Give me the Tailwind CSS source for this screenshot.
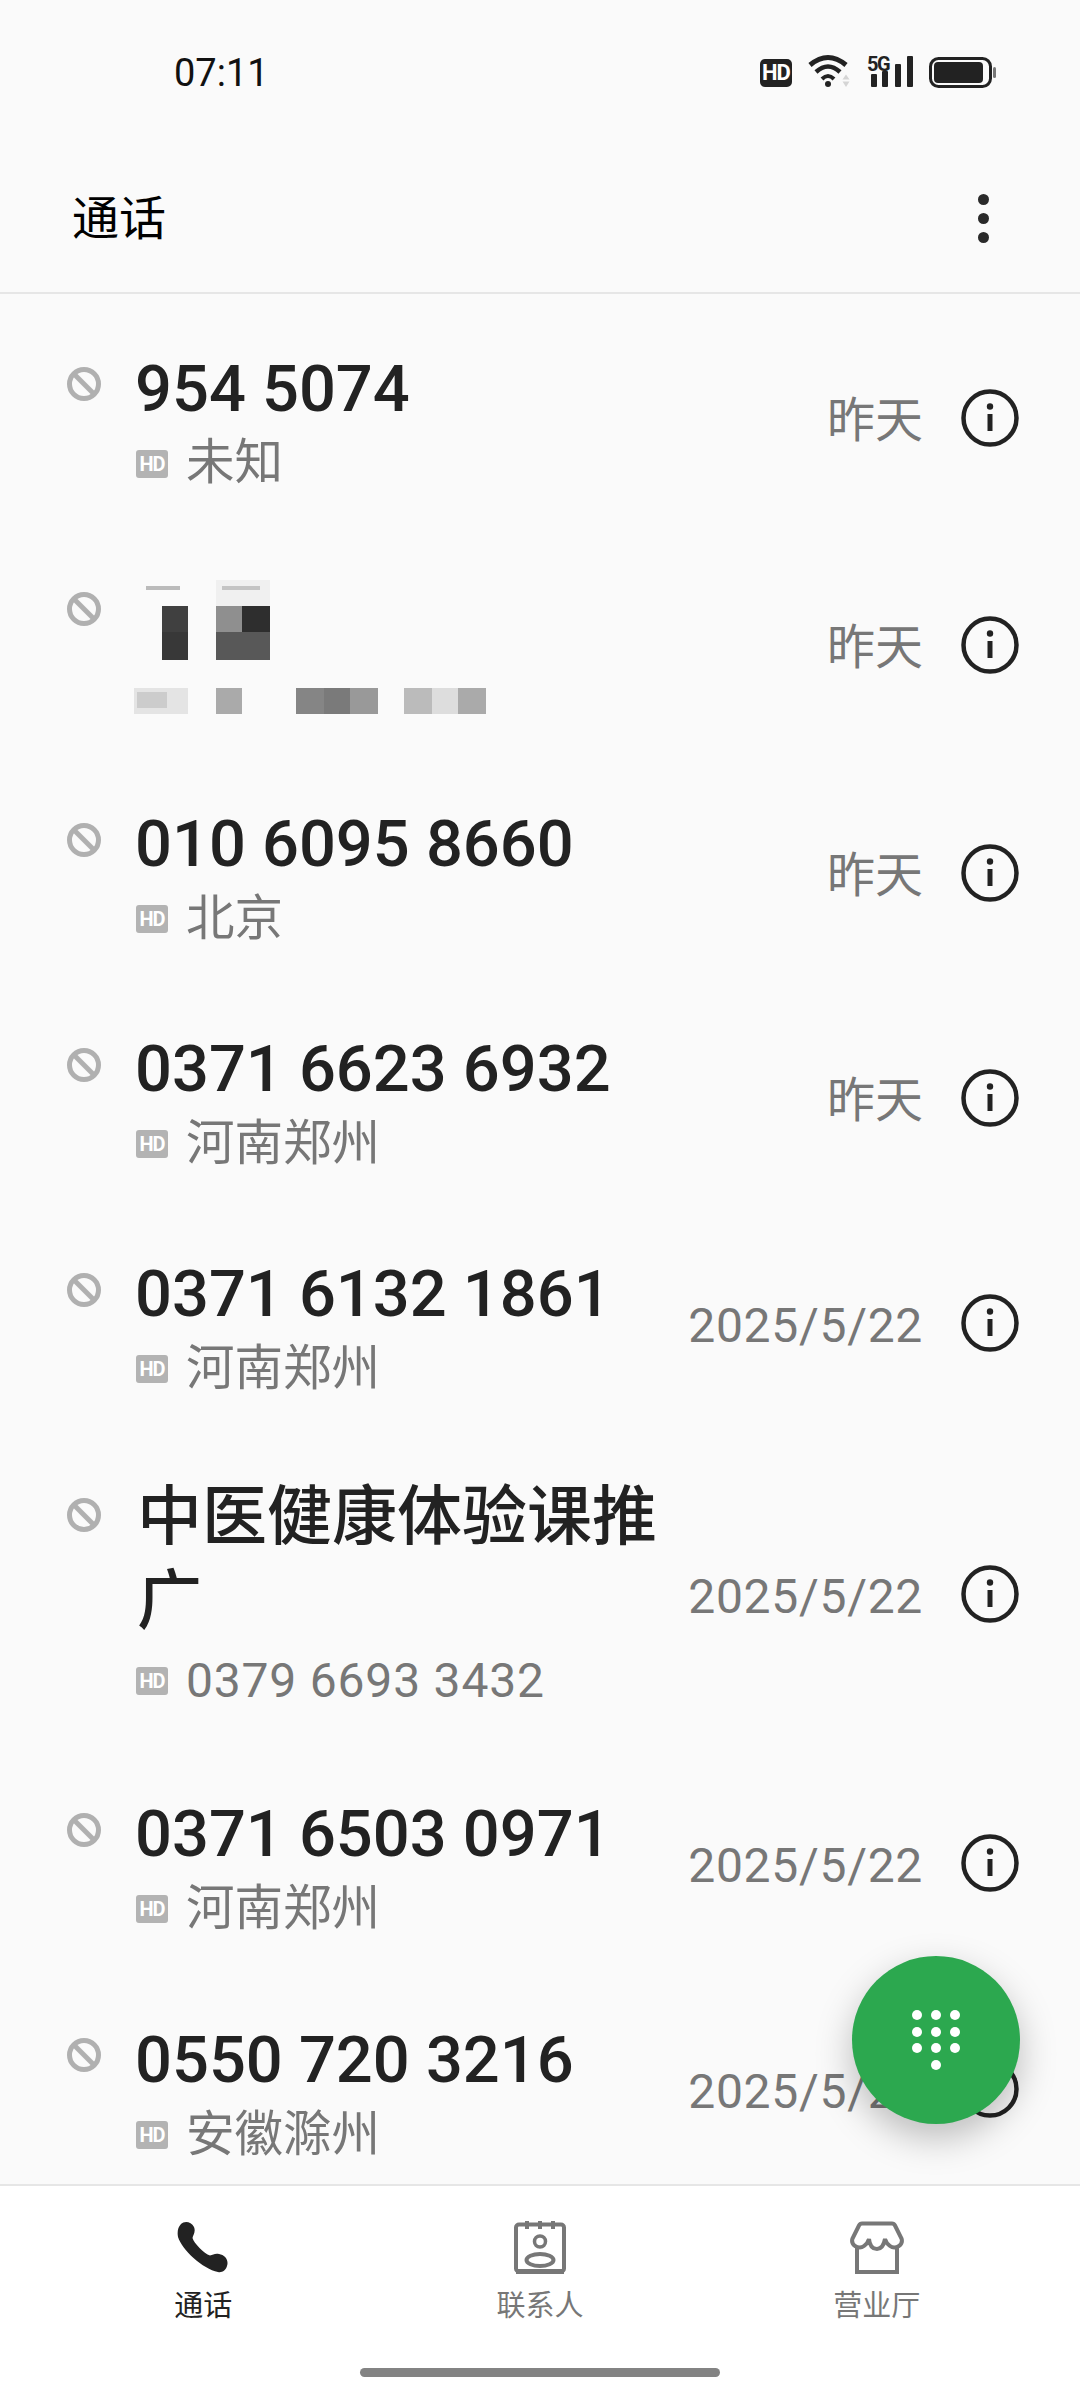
<!DOCTYPE html>
<html lang="zh-CN">
<head>
  <meta charset="UTF-8" />
  <meta name="viewport" content="width=device-width, initial-scale=1.0"/>
  <title>通话</title>
  <script src="https://cdn.jsdelivr.net/npm/@tailwindcss/browser@4"></script>
</head>
<body class="bg-[#fafafa] text-[#222222] font-[Roboto,'Noto_Sans_CJK_SC',sans-serif]">

  <svg class="hidden">
    <symbol id="ban" viewBox="0 0 34 34">
      <circle cx="17" cy="17" r="14.5" fill="none" stroke="#b0b0b0" stroke-width="5"/>
      <path d="M7 7L27 27" stroke="#b0b0b0" stroke-width="5"/>
    </symbol>
    <symbol id="info" viewBox="0 0 58 58">
      <circle cx="29" cy="29" r="26.5" fill="none" stroke="#222222" stroke-width="4.5"/>
      <circle cx="29" cy="17.500" r="3.200" fill="#222222"/>
      <path d="M29 25V42" fill="none" stroke="#222222" stroke-width="5"/>
    </symbol>
  </svg>

  <div class="relative h-[2400px] w-[1080px] flex flex-col overflow-hidden">

    <!-- status bar -->
    <div class="h-[146px] shrink-0 flex items-center justify-between pl-[174px] pr-[84px]">
      <span class="text-[38px] leading-none text-[#111111]">07:11</span>
      <div class="flex items-center gap-4">
        <div class="w-[32px] h-[28px] rounded-[5px] bg-[#222222] text-white text-[22px] leading-[28px] font-bold text-center tracking-[-1px]">HD</div>
        <svg width="43" height="33" viewBox="0 0 43 33" class="-mt-[5px]">
          <g fill="none" stroke="#222222">
            <path d="M2 11Q20 -4 38 11" stroke-width="5"/>
            <path d="M8 18Q20 7 32 18" stroke-width="4.5"/>
            <path d="M14 25Q20 19 26 25" stroke-width="4"/>
          </g>
          <circle cx="20" cy="30" r="3" fill="#222222"/>
          <path d="M34.500 25.500L38 20.500L41.500 25.500ZM34.500 27.500H41.500L38 33Z" fill="#d5d5d5"/>
        </svg>
        <div class="relative w-[46px] h-[31px] -mt-[3px]">
          <span class="absolute left-0 -top-[2px] text-[20px] leading-[20px] font-bold tracking-[-1.5px]">5G</span>
          <svg width="46" height="31" viewBox="0 0 46 31">
            <rect x="4" y="18" width="6" height="13" rx="1" fill="#222222"/>
            <rect x="15" y="15" width="6" height="16" rx="1" fill="#222222"/>
            <rect x="28" y="8" width="6" height="23" rx="1" fill="#222222"/>
            <rect x="40" y="0" width="6" height="31" rx="1" fill="#222222"/>
          </svg>
        </div>
        <svg width="67" height="31" viewBox="0 0 67 31" class="-mt-[1px]">
          <rect x="1.500" y="1.500" width="60" height="28" rx="8" fill="none" stroke="#222222" stroke-width="3"/>
          <rect x="5" y="5" width="49" height="21" rx="4" fill="#222222"/>
          <rect x="64" y="10" width="3" height="11" rx="1.500" fill="#777777"/>
        </svg>
      </div>
    </div>

    <!-- title bar -->
    <div class="h-[148px] shrink-0 flex items-center justify-between pl-[72px] pr-[91px] pb-[2px] border-b-2 border-[#e6e6e6]">
      <span class="text-[47px] leading-none text-black">通话</span>
      <div class="flex flex-col gap-2">
        <span class="w-[11px] h-[11px] rounded-full bg-[#2a2a2a]"></span>
        <span class="w-[11px] h-[11px] rounded-full bg-[#2a2a2a]"></span>
        <span class="w-[11px] h-[11px] rounded-full bg-[#2a2a2a]"></span>
      </div>
    </div>

    <!-- call list -->
    <div class="flex-1 min-h-0 overflow-hidden pt-[11px]">

      <div class="h-[225px] flex items-center pl-[67px] pr-[61px]">
        <svg class="w-[34px] h-[34px] shrink-0 self-start mt-[62px]"><use href="#ban"/></svg>
        <div class="ml-[34px] w-[531px] pt-[8px]">
          <div class="text-[65px] leading-[84px] font-medium">954 5074</div>
          <div class="flex items-center gap-[18px] h-[66px] pl-[1px] text-[48.5px] text-[#777777]"><div class="w-[32px] h-[28px] rounded-[3px] bg-[#b3b3b3] text-white text-[20px] leading-[28px] font-bold text-center tracking-[-1px]">HD</div>未知</div>
        </div>
        <span class="ml-auto pt-[6px] text-[48px] text-[#777777]">昨天</span>
        <svg class="w-[58px] h-[58px] ml-[38px] shrink-0"><use href="#info"/></svg>
      </div>

      <!-- row with the name pixelated out -->
      <div class="relative h-[230px] flex items-center pl-[67px] pr-[61px]">
        <svg class="w-[34px] h-[34px] shrink-0 self-start mt-[62px]"><use href="#ban"/></svg>
        <span class="ml-auto pt-[6px] text-[48px] text-[#777777]">昨天</span>
        <svg class="w-[58px] h-[58px] ml-[38px] shrink-0"><use href="#info"/></svg>
        <div class="absolute left-[146px] top-[56px] w-[34px] h-[4px] bg-[#bbbbbb]"></div>
        <div class="absolute left-[216px] top-[50px] w-[54px] h-[26px] bg-[#f0f0f0]"></div>
        <div class="absolute left-[222px] top-[56px] w-[38px] h-[4px] bg-[#c4c4c4]"></div>
        <div class="absolute left-[162px] top-[76px] w-[26px] h-[26px] bg-[#404040]"></div>
        <div class="absolute left-[162px] top-[102px] w-[26px] h-[28px] bg-[#383838]"></div>
        <div class="absolute left-[216px] top-[76px] w-[26px] h-[26px] bg-[#8f8f8f]"></div>
        <div class="absolute left-[242px] top-[76px] w-[28px] h-[26px] bg-[#2e2e2e]"></div>
        <div class="absolute left-[216px] top-[102px] w-[54px] h-[28px] bg-[#585858]"></div>
        <div class="absolute left-[134px] top-[158px] w-[54px] h-[26px] bg-[#e4e4e4]"></div>
        <div class="absolute left-[137px] top-[162px] w-[30px] h-[16px] bg-[#cccccc]"></div>
        <div class="absolute left-[216px] top-[158px] w-[26px] h-[26px] bg-[#aaaaaa]"></div>
        <div class="absolute left-[296px] top-[158px] w-[28px] h-[26px] bg-[#858585]"></div>
        <div class="absolute left-[324px] top-[158px] w-[26px] h-[26px] bg-[#7a7a7a]"></div>
        <div class="absolute left-[350px] top-[158px] w-[28px] h-[26px] bg-[#999999]"></div>
        <div class="absolute left-[404px] top-[158px] w-[28px] h-[26px] bg-[#bbbbbb]"></div>
        <div class="absolute left-[432px] top-[158px] w-[26px] h-[26px] bg-[#dddddd]"></div>
        <div class="absolute left-[458px] top-[158px] w-[28px] h-[26px] bg-[#aaaaaa]"></div>
      </div>

      <div class="h-[226px] flex items-center pl-[67px] pr-[61px]">
        <svg class="w-[34px] h-[34px] shrink-0 self-start mt-[63px]"><use href="#ban"/></svg>
        <div class="ml-[34px] w-[531px] pt-[8px]">
          <div class="text-[65px] leading-[84px] font-medium">010 6095 8660</div>
          <div class="flex items-center gap-[18px] h-[66px] pl-[1px] text-[48.5px] text-[#777777]"><div class="w-[32px] h-[28px] rounded-[3px] bg-[#b3b3b3] text-white text-[20px] leading-[28px] font-bold text-center tracking-[-1px]">HD</div>北京</div>
        </div>
        <span class="ml-auto pt-[6px] text-[48px] text-[#777777]">昨天</span>
        <svg class="w-[58px] h-[58px] ml-[38px] shrink-0"><use href="#info"/></svg>
      </div>

      <div class="h-[224px] flex items-center pl-[67px] pr-[61px]">
        <svg class="w-[34px] h-[34px] shrink-0 self-start mt-[62px]"><use href="#ban"/></svg>
        <div class="ml-[34px] w-[531px] pt-[8px]">
          <div class="text-[65px] leading-[84px] font-medium">0371 6623 6932</div>
          <div class="flex items-center gap-[18px] h-[66px] pl-[1px] text-[48.5px] text-[#777777]"><div class="w-[32px] h-[28px] rounded-[3px] bg-[#b3b3b3] text-white text-[20px] leading-[28px] font-bold text-center tracking-[-1px]">HD</div>河南郑州</div>
        </div>
        <span class="ml-auto pt-[6px] text-[48px] text-[#777777]">昨天</span>
        <svg class="w-[58px] h-[58px] ml-[38px] shrink-0"><use href="#info"/></svg>
      </div>

      <div class="h-[226px] flex items-center pl-[67px] pr-[61px]">
        <svg class="w-[34px] h-[34px] shrink-0 self-start mt-[63px]"><use href="#ban"/></svg>
        <div class="ml-[34px] w-[531px] pt-[8px]">
          <div class="text-[65px] leading-[84px] font-medium">0371 6132 1861</div>
          <div class="flex items-center gap-[18px] h-[66px] pl-[1px] text-[48.5px] text-[#777777]"><div class="w-[32px] h-[28px] rounded-[3px] bg-[#b3b3b3] text-white text-[20px] leading-[28px] font-bold text-center tracking-[-1px]">HD</div>河南郑州</div>
        </div>
        <span class="ml-auto pt-[6px] text-[48px] tracking-[0.7px] text-[#777777]">2025/5/22</span>
        <svg class="w-[58px] h-[58px] ml-[38px] shrink-0"><use href="#info"/></svg>
      </div>

      <div class="h-[316px] flex items-center pl-[67px] pr-[61px]">
        <svg class="w-[34px] h-[34px] shrink-0 self-start mt-[62px]"><use href="#ban"/></svg>
        <div class="ml-[34px] w-[531px]">
          <div class="text-[65px] leading-[84px] font-medium pl-[2px]">中医健康体验课推广</div>
          <div class="flex items-center gap-[18px] h-[66px] mt-[5px] pl-[1px] text-[48px] tracking-[0.8px] text-[#777777]"><div class="w-[32px] h-[28px] rounded-[3px] bg-[#b3b3b3] text-white text-[20px] leading-[28px] font-bold text-center tracking-[-1px]">HD</div>0379 6693 3432</div>
        </div>
        <span class="ml-auto pt-[6px] text-[48px] tracking-[0.7px] text-[#777777]">2025/5/22</span>
        <svg class="w-[58px] h-[58px] ml-[38px] shrink-0"><use href="#info"/></svg>
      </div>

      <div class="h-[222px] flex items-center pl-[67px] pr-[61px]">
        <svg class="w-[34px] h-[34px] shrink-0 self-start mt-[61px]"><use href="#ban"/></svg>
        <div class="ml-[34px] w-[531px] pt-[8px]">
          <div class="text-[65px] leading-[84px] font-medium">0371 6503 0971</div>
          <div class="flex items-center gap-[18px] h-[66px] pl-[1px] text-[48.5px] text-[#777777]"><div class="w-[32px] h-[28px] rounded-[3px] bg-[#b3b3b3] text-white text-[20px] leading-[28px] font-bold text-center tracking-[-1px]">HD</div>河南郑州</div>
        </div>
        <span class="ml-auto pt-[6px] text-[48px] tracking-[0.7px] text-[#777777]">2025/5/22</span>
        <svg class="w-[58px] h-[58px] ml-[38px] shrink-0"><use href="#info"/></svg>
      </div>

      <div class="h-[230px] flex items-center pl-[67px] pr-[61px]">
        <svg class="w-[34px] h-[34px] shrink-0 self-start mt-[64px]"><use href="#ban"/></svg>
        <div class="ml-[34px] w-[531px] pt-[8px]">
          <div class="text-[65px] leading-[84px] font-medium">0550 720 3216</div>
          <div class="flex items-center gap-[18px] h-[66px] pl-[1px] text-[48.5px] text-[#777777]"><div class="w-[32px] h-[28px] rounded-[3px] bg-[#b3b3b3] text-white text-[20px] leading-[28px] font-bold text-center tracking-[-1px]">HD</div>安徽滁州</div>
        </div>
        <span class="ml-auto pt-[6px] text-[48px] tracking-[0.7px] text-[#777777]">2025/5/22</span>
        <svg class="w-[58px] h-[58px] ml-[38px] shrink-0"><use href="#info"/></svg>
      </div>
    </div>

    <!-- dial button -->
    <div class="absolute left-[852px] top-[1956px] w-[168px] h-[168px] rounded-full bg-[#2ca84f] shadow-[0_14px_36px_rgba(0,0,0,0.25)] flex items-center justify-center">
      <svg width="48" height="60" viewBox="0 0 48 60" fill="#ffffff">
        <circle cx="5" cy="5" r="5"/><circle cx="24" cy="5" r="5"/><circle cx="43" cy="5" r="5"/>
        <circle cx="5" cy="22" r="5"/><circle cx="24" cy="22" r="5"/><circle cx="43" cy="22" r="5"/>
        <circle cx="5" cy="38" r="5"/><circle cx="24" cy="38" r="5"/><circle cx="43" cy="38" r="5"/>
        <circle cx="24" cy="55" r="5"/>
      </svg>
    </div>

    <!-- bottom nav -->
    <div class="h-[216px] shrink-0 bg-white border-t-2 border-[#e6e6e6] flex flex-col">
      <div class="grid grid-cols-3 px-[35px] pt-[36px]">
        <div class="flex flex-col items-center gap-[13px] text-[#222222]">
          <svg width="52" height="53" viewBox="0 0 52 53" fill="#222222">
            <path d="M4 2C7 -1 14 -1 17 5C19 10 16 13 15.500 16C17 21 27 32 33 33.500C36 33 38 31 42 32C48 33 52 38 50 44C49 48 45 51 41 50C26 47 5 28 1 15C0 10 1 5 4 2Z"/>
          </svg>
          <span class="text-[29px] leading-[36px]">通话</span>
        </div>
        <div class="flex flex-col items-center gap-[13px] text-[#777777]">
          <svg width="52" height="53" viewBox="0 0 52 53" fill="none" stroke="#777777" class="-mt-[1px] mb-[1px]">
            <rect x="2" y="3.500" width="48" height="47" rx="3" stroke-width="4"/>
            <path d="M13 0V8M26 0V8M39 0V8" stroke-width="4"/>
            <path d="M2 50.500H50" stroke-width="5"/>
            <circle cx="26" cy="20.500" r="5.500" stroke-width="3.500"/>
            <ellipse cx="26" cy="39" rx="13.500" ry="6" stroke-width="4"/>
          </svg>
          <span class="text-[29px] leading-[36px]">联系人</span>
        </div>
        <div class="flex flex-col items-center gap-[13px] text-[#777777]">
          <svg width="54" height="53" viewBox="0 0 54 53" fill="none" stroke="#777777" stroke-width="4" class="-mt-[1px] mb-[1px]">
            <path d="M12 2.500H42Q44 2.500 45 4.500L51.500 17.500Q53 22 49 25Q44 28 40 25Q36 22 35 18Q33 28 27 28Q20 28 19 18Q18 22 14 25Q10 28 5 25Q1 22 2.500 17.500L9 4.500Q10 2.500 12 2.500Z"/>
            <path d="M7 26V51H47V26"/>
          </svg>
          <span class="text-[29px] leading-[36px]">营业厅</span>
        </div>
      </div>
      <div class="mt-[44px] mx-auto w-[360px] h-[9px] rounded-full bg-[#838383]"></div>
    </div>
  </div>

</body>
</html>
